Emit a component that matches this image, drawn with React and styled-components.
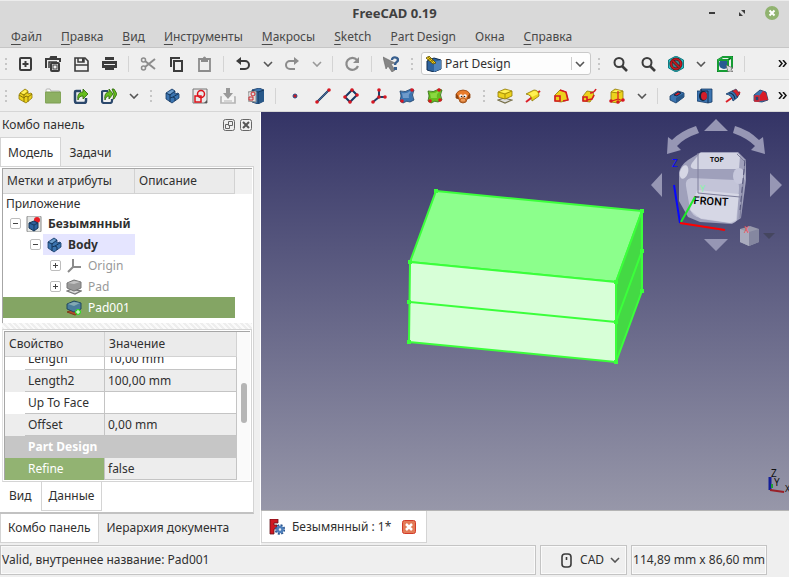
import { useState } from "react";
import styled, { createGlobalStyle } from "styled-components";

const GlobalStyle = createGlobalStyle`
    * { box-sizing: border-box; }
    html, body, #root { height: 100%; }
    body {
        margin: 0;
        overflow: hidden;
        background: #efefef;
        color: #303030;
        font-family: "Noto Sans", "Open Sans", sans-serif;
        font-size: 12px;
        line-height: 20px;
    }
    button, select {
        font: inherit;
        color: inherit;
        border: none;
        background: none;
        padding: 0;
        margin: 0;
    }
    table { border-collapse: separate; border-spacing: 0; }
    svg { display: block; }
`;

const dark = { fill: "none", stroke: "#3c3c3c", strokeWidth: 2 };
const gray = { fill: "none", stroke: "#8c8c8c", strokeWidth: 2 };
const yellow = { fill: "#ecd21c", stroke: "#8f7a08", strokeWidth: 0.8 };
const blue = { fill: "#3b74b0", stroke: "#153a66", strokeWidth: 0.8 };
const red = { fill: "none", stroke: "#d71b23", strokeWidth: 1.6 };

const icons = {
    new: <><rect x="3" y="2" width="11" height="12" rx="1" {...dark} /><path d="M8.500 5v6M5.500 8h6" {...dark} /></>,
    open: <><path d="M1 12V3h4l1-2h6" {...dark} /><path d="M1 3h14v3" {...dark} /><path d="M4 12V6h8" {...dark} strokeWidth="1.500" /><rect x="6" y="7" width="8" height="8" rx="1" fill="#efefef" stroke="#3c3c3c" strokeWidth="2" /><rect x="8" y="9" width="4" height="4" fill="#efefef" stroke="#3c3c3c" /></>,
    save: <><path d="M2 2h10l3 3v10H2z" {...dark} strokeWidth="1.600" /><path d="M5 2v4h6V2M2 9h13" {...dark} strokeWidth="1.500" /><rect x="9" y="2" width="2" height="4" fill="#3c3c3c" /></>,
    print: <><rect x="4" y="1" width="9" height="3" fill="#3c3c3c" /><path d="M1 5h15v7h-3v-2H4v2H1z" fill="#3c3c3c" /><rect x="4" y="9" width="9" height="5" fill="#3c3c3c" /><rect x="3" y="8" width="11" height="1" fill="#eee" /></>,
    cut: <><path d="M5 5l10 8M5 11l10-8" {...gray} /><circle cx="3.500" cy="4" r="2" {...gray} strokeWidth="1.500" /><circle cx="3.500" cy="12" r="2" {...gray} strokeWidth="1.500" /></>,
    copy: <><path d="M3 11V2h9" {...dark} /><rect x="6" y="5" width="8" height="10" {...dark} /></>,
    paste: <><path d="M3 3h11v12H3z" {...gray} strokeWidth="1.800" /><path d="M5 2h7v4H5z" fill="#8c8c8c" /><circle cx="8.500" cy="2" r="1.500" fill="#8c8c8c" /></>,
    undo: <><path d="M3 5h7a4 4 0 0 1 0 8H5" {...dark} /><path d="M6 1v8L1 5z" fill="#3c3c3c" /></>,
    redo: <><path d="M13 5H6a4 4 0 0 0 0 8h5" {...gray} /><path d="M10 1v8l5-4z" fill="#8c8c8c" /></>,
    refresh: <><path d="M13 4a6 6 0 1 0 1 6" {...gray} strokeWidth="2.200" /><path d="M15 1v6H9z" fill="#8c8c8c" /></>,
    whats: <><path d="M0 1l12 6-4 1 4 6-3 2-4-6-2 3z" fill="#858585" stroke="#666" strokeWidth=".6" /><path d="M9 4c0-4 6-3 6 0 0 2-3 2-3 5" fill="none" stroke="#39608f" strokeWidth="2.400" /><rect x="11" y="11" width="3" height="3" fill="#39608f" /></>,
    zoom: <><circle cx="7" cy="6.500" r="4.500" {...dark} /><path d="M10 10l5 5" {...dark} strokeWidth="2.600" /></>,
    drawstyle: <><path d="M8 0l7.500 4v8l-7.500 4-7.500-4V4z" fill="#23c3cc" stroke="#127c82" /><circle cx="8" cy="8" r="5" fill="#3c7f88" stroke="#531a1d" strokeWidth="3" /><circle cx="8" cy="8" r="5" fill="none" stroke="#cc1720" strokeWidth="1.600" /><path d="M4.500 4.500l7 7" stroke="#531a1d" strokeWidth="3" /><path d="M4.500 4.500l7 7" stroke="#cc1720" strokeWidth="1.600" /></>,
    bound: <><circle cx="7" cy="8" r="5" fill="#285a92" /><path d="M1 4l5-3h9v10l-4 4H1zM1 4h10v11M11 4l4-3" fill="none" stroke="#087b21" strokeWidth="2" /><path d="M1 4l5-3h9v10l-4 4H1zM1 4h10v11" fill="none" stroke="#28c64c" strokeWidth=".9" /><path d="M9 9l7 3-2 1 2 3-3-1-2 1z" fill="#ddd" stroke="#555" strokeWidth=".6" /></>,
    part: <><path d="M3 5l5-4 3 2v3l3-1 1 1v4l-6 5-7-4V7z" {...yellow} /><path d="M2 7l5 3v4M7 10l2-2 2 1v5M11 9l4-3M7 7l4-3M3 5l4 2v3" fill="none" stroke="#8a7406" /><path d="M4 5l4-3 2 1-3 3z" fill="#fff25e" /></>,
    folder: <><path d="M1 4V2q0-1 1-1h3l1 2h8q1 0 1 1" fill="#fff" stroke="#b5b5b5" /><rect x="0" y="4" width="16" height="11" rx="1" fill="#8db062" stroke="#7a9c51" /></>,
    link: <><path d="M8 3H3q-1 0-1 1v9q0 2 2 2h7q2 0 2-2v-3" fill="none" stroke="#2b486c" strokeWidth="2.500" /><path d="M5 12c-1-5 1-8 5-8V1l5 5-5 5V8c-3 0-4 1-5 4z" fill="#65bd1d" stroke="#2a6307" strokeWidth=".8" /></>,
    links: <><path d="M7 3H3q-2 0-2 1v9q0 2 2 2h6q2 0 2-2v-2" fill="none" stroke="#2b486c" strokeWidth="2.200" /><path d="M4 12c-1-5 1-8 4-8V1l4 5-4 5V8c-2 0-3 1-4 4zM11 1h2l3 5-3 5h-1l1-5z" fill="#65bd1d" stroke="#2a6307" strokeWidth=".8" /></>,
    body: <><path d="M2 5l6-4 3 2v3l3-1 1 1v4l-7 5-6-4z" {...blue} /><path d="M2 5l4 2v3l3-1 2 1v3M6 7l5-4M9 9l5-3M6 10v4" fill="none" stroke="#143559" /><path d="M3 5l5-3 2 1-4 3z" fill="#72a0cc" /></>,
    sketch: <><path d="M1 1h14v14H1z" fill="#e9e9e9" stroke="#777" /><path d="M12 15l3-3v3z" fill="#555" /><circle cx="9" cy="6" r="3.500" fill="none" stroke="#db1019" strokeWidth="1.500" /><path d="M3 8h6v6H3z" fill="none" stroke="#e0141d" strokeWidth="1.500" /></>,
    map: <><path d="M2 9H1v6h14V9h-1" fill="#f4f4f4" stroke="#b5b5b5" strokeWidth="1.700" /><path d="M6 0h4v5h3l-5 6-5-6h3z" fill="#999" /><path d="M4 13h8" stroke="#b5b5b5" /></>,
    validate: <><path d="M4 2l7-2 5 2v11l-6 3-6-2z" {...blue} /><path d="M10 4l6-2v11l-6 3z" fill="#285889" /><path d="M4 2l6 2v12M10 4l6-2" fill="none" stroke="#16385d" /><path d="M0 4l8-1v11l-8-1z" fill="#ddd" stroke="#888" /><circle cx="5" cy="6" r="2" fill="none" stroke="#cf262d" /><path d="M1 9h4v3H1z" fill="none" stroke="#cf262d" /></>,
    point: <circle cx="8" cy="8" r="2" fill="#cc1923" stroke="#274e87" />,
    line: <><path d="M2 14L14 2" stroke="#16345b" strokeWidth="2" /><path d="M2 14L14 2" stroke="#4c79ac" strokeWidth=".8" /><Dots at={[[2, 14], [14, 2]]} /></>,
    plane: <><path d="M2 9l7-7 5 5-7 7z" fill="none" stroke="#173a64" strokeWidth="2" /><Dots at={[[2, 9], [9, 2], [14, 7], [7, 14]]} /></>,
    axes: <><path d="M8 1v8L2 14M8 9h7" fill="none" stroke="#203e67" strokeWidth="2" /><Dots at={[[8, 2], [2, 14], [14, 9], [8, 9]]} /></>,
    binder: <><path d="M1 3q5 2 11-2l3 1q-3 5 0 10l-4 2q-3-2-7 1l-3-2q2-5 0-10z" {...blue} /><path d="M3 5q5 1 8-2l1 1q-3 2-2 6H4z" fill="#6f9bcb" /><Dots at={[[13, 2], [3, 13]]} /></>,
    subbinder: <><path d="M1 3q5 2 11-2l3 1q-3 5 0 10l-4 2q-3-2-7 1l-3-2q2-5 0-10z" fill="#65bd1d" stroke="#2b6b09" strokeWidth=".8" /><path d="M3 5q5 1 8-2l1 1q-3 2-2 6H4z" fill="#8bd940" /><Dots at={[[12, 2], [3, 13], [13, 12]]} /></>,
    clone: <><path d="M1 6q2-4 7-4t7 4v4l-3 1-1 3-3 1-3-1-1-3-3-1z" fill="#e87c2c" stroke="#97480f" strokeWidth=".8" /><path d="M1 6q2 0 3 5l-3-1zM15 6q-2 0-3 5l3-1z" fill="#8f430e" /><circle cx="6" cy="8" r="1.800" fill="#fff" /><circle cx="10" cy="8" r="1.800" fill="#fff" /><circle cx="6.500" cy="8.500" r=".8" fill="#222" /><circle cx="9.500" cy="8.500" r=".8" fill="#222" /><path d="M5 12q3-4 6 0l-1 2H6z" fill="#f19a56" stroke="#97480f" strokeWidth=".6" /></>,
    pad: <><path d="M1 12l6-2 8 2-7 3z" fill="#ddd" stroke="#77704a" strokeWidth="1.200" /><path d="M1 4l7-3 7 2v5l-7 3-7-2z" {...yellow} /><path d="M2 4l6-2 6 1-6 2z" fill="#fff25c" /><path d="M1 4l7 2 7-3M8 6v5" fill="none" stroke="#a58f0b" /></>,
    revolve: <><path d="M1 14L15 3" stroke="#dc2029" strokeWidth="2" /><path d="M1 6l8-4q5 0 5 6l-7 5q0-6-6-7z" {...yellow} /><path d="M3 6l6-3q3 0 4 3L7 9q-1-3-4-3z" fill="#fff052" /></>,
    loft: <><path d="M2 7l5-5 6 2 2 8-7 2-6-1z" {...yellow} /><path d="M2 8h5v5H2zM7 2l6 2 2 8-5 1" {...red} /></>,
    pipe: <><path d="M2 8l4-5 6 1 1 4-4 6-7-1z" {...yellow} /><path d="M2 9h4v4H2zM9 5q4 0 6-4M6 12l5-1 2-4" {...red} /></>,
    prim: <><path d="M2 4l4-3 8 2v9l-5 3-7-1z" {...yellow} /><path d="M2 4l7 1 5-2" fill="none" stroke="#a58f0b" /><path d="M3 4l4-2 6 1-4 1z" fill="#fff25c" /><path d="M9 3v8l-6 2M9 11l5 2" {...red} strokeWidth="1.200" /><Dots at={[[2, 13], [14, 12], [9, 14]]} /></>,
    pocket: <><path d="M1 8l8-5 6 2v4l-8 6-6-3z" {...blue} /><path d="M7 10l8-5v4l-8 6z" fill="#285889" /><path d="M5 7l4-3 3 1-4 3z" fill="#d91b28" stroke="#122e4e" /></>,
    hole: <><path d="M0 3h4V1h11v13l-4 1-11-2z" {...blue} /><path d="M4 1v2h7v12" fill="none" stroke="#123154" /><ellipse cx="6" cy="8" rx="4" ry="5" fill="#10243f" /><ellipse cx="7" cy="8" rx="3" ry="4" fill="#d41d29" /></>,
    groove: <><path d="M1 14L15 4" stroke="#dc2029" strokeWidth="2" /><path d="M1 6l6-3q6 0 6 6l-5 4q-1-6-7-7z" {...blue} /><path d="M7 3l4-2 4 5-3 3q-1-4-5-6z" fill="#d7222c" stroke="#15345a" strokeWidth=".6" /><path d="M4 5q5 0 6 6" fill="none" stroke="#132c49" strokeWidth="1.200" /></>,
    subloft: <><path d="M1 7l6-5 6 2 2 8-6 2-8-1z" {...blue} /><path d="M7 7l3-4 3 2 2 7-8 1z" fill="#d81b27" /><path d="M2 8h4v5H2z" fill="#24466f" stroke="#df222d" strokeWidth="1.400" /></>,
    workbench: <><path d="M1 5l7-3 7 2v9l-7 3-7-2z" fill="#2e639e" stroke="#0e2c4e" /><path d="M8 6l7-2v9l-7 3z" fill="#4e83bb" /><path d="M3 0l7 7-3 1-7-6z" fill="#efcf1d" stroke="#594800" strokeWidth=".8" /><path d="M2 1l6 6M5 2l-3 2M7 4L4 6" stroke="#594800" strokeWidth=".6" /></>,
    doc: <><rect x="1" y="0" width="14" height="16" rx="1" fill="#e4e7e6" stroke="#888" /><circle cx="11" cy="4" r="3" fill="#e61d25" /><path d="M3 7l5-2 4 2v5l-4 3-5-3z" fill="#2d629e" stroke="#153456" /><path d="M3 7l5 2 4-2M8 9v6" fill="none" stroke="#17395f" /></>,
    origin: <path d="M7 1v8L2 14M7 9h8" fill="none" stroke="#8b8b8b" strokeWidth="2" />,
    padGray: <><path d="M1 12l5-2 9 2-6 3z" fill="#ddd" stroke="#777" strokeWidth="1.300" /><path d="M1 4l7-3 7 2v6l-7 3-7-3z" fill="#999" stroke="#777" /><path d="M2 4l6-2 6 1-6 2z" fill="#c3c3c3" /></>,
    padTip: <><path d="M1 12l5-2 9 2-6 3z" fill="#b44a26" stroke="#7c3d1b" /><path d="M1 4l7-3 7 2v6l-7 3-7-3z" fill="#4a7d9b" stroke="#23485f" /><path d="M2 4l6-2 6 1-6 3z" fill="#83a9b3" /><path d="M12 9v6M9 12h6" stroke="#36dc2c" strokeWidth="3" /><path d="M12 10v4M10 12h4" stroke="#fff" /></>,
    freecad: <><path d="M1 0h8v4H5v2h3v4H5v5H1z" fill="#d01822" stroke="#60131b" strokeWidth=".8" /><circle cx="11" cy="10.500" r="4.300" fill="none" stroke="#2c5690" strokeWidth="2" strokeDasharray="2 1.380" /><circle cx="11" cy="10.500" r="2.500" fill="#efefef" stroke="#4d7fbb" strokeWidth="2.500" /></>,
    mouse: <><rect x="4" y="2" width="9" height="13" rx="3" {...dark} strokeWidth="1.600" /><path d="M8.500 5v3" {...dark} strokeWidth="1.600" /></>,
};

function Dots({ at }) {
    return at.map(([x, y]) => <circle key={`${x}-${y}`} cx={x} cy={y} r="1.800" fill="#d71722" />);
}

const Icon = ({ name }) => (
    <svg width="16" height="16" viewBox="0 0 16 16" aria-hidden="true">{icons[name]}</svg>
);

const Chevron = ({ pale }) => (
    <svg width="10" height="6" viewBox="0 0 10 6" aria-hidden="true">
        <path d="M1 1l4 4 4-4" fill="none" stroke={pale ? "#999" : "#555"} strokeWidth="1.600" />
    </svg>
);

const More = () => (
    <svg width="9" height="7" viewBox="0 0 9 7" aria-hidden="true">
        <path d="M1 0l3 3.500L1 7M5 0l3 3.500L5 7" fill="none" stroke="#111" strokeWidth="1.500" />
    </svg>
);

const menus = [
    ["Ф", "айл"], ["П", "равка"], ["В", "ид"], ["И", "нструменты"], ["М", "акросы"],
    ["S", "ketch"], ["P", "art Design"], ["", "Окна"], ["С", "правка"],
];

// "|" separator, ":" handle, "v" drop-down arrow
const fileBar = ["new", "open", "save", "print", "|", "cut", "copy", "paste", "|", "undo", "v", "redo", "v-", "|", "refresh", "|", "whats", ":"];
const viewBar = [":", "zoom", "zoom", "drawstyle", "v", "bound", "|"];
const designBar = ["part", "folder", "link", "links", "v", ":", "body", "sketch", "map", "validate", "|",
    "point", "line", "plane", "axes", "binder", "subbinder", "clone", ":",
    "pad", "revolve", "loft", "pipe", "prim", "v", "|", "pocket", "hole", "groove", "subloft"];

const tree = [
    { label: "Безымянный", icon: "doc", level: 0, sign: "−", bold: true },
    { label: "Body", icon: "body", level: 1, sign: "−", bold: true, active: true },
    { label: "Origin", icon: "origin", level: 2, sign: "+", dim: true },
    { label: "Pad", icon: "padGray", level: 2, sign: "+", dim: true },
    { label: "Pad001", icon: "padTip", level: 2, selected: true },
];

const props = [
    ["Length", "10,00 mm"],
    ["Length2", "100,00 mm"],
    ["Up To Face", ""],
    ["Offset", "0,00 mm"],
];

const Tools = ({ items }) => items.map((item, i) => {
    if (item === "|") return <Separator key={i} />;
    if (item === ":") return <Handle key={i} />;
    if (item[0] === "v" && item.length < 3) {
        return <ArrowButton key={i} aria-label="menu"><Chevron pale={item === "v-"} /></ArrowButton>;
    }
    return <ToolButton key={i} aria-label={item}><Icon name={item} /></ToolButton>;
});

const Scene = () => (
    <svg width="100%" height="100%" viewBox="261 112 528 398" preserveAspectRatio="xMaxYMin meet">
        <g stroke="#3bff3b" strokeWidth="2" strokeLinejoin="round">
            <path d="M436 191l206 20-26 71-206-20z" fill="#8cff8c" />
            <path d="M642 211v80l-26 71v-80z" fill="#44d944" />
            <path d="M410 262l206 20v80l-207-20z" fill="#d7ffd7" />
            <path d="M410 302l206 20 26-71" fill="none" />
        </g>
        <g fill="#3bff3b">
            {[[436, 191], [642, 211], [616, 282], [410, 262], [409, 302], [616, 322], [642, 251], [642, 291], [409, 342], [616, 362]].map(([x, y]) => (
                <rect key={`${x}-${y}`} x={x - 2} y={y - 2} width="4" height="4" />
            ))}
        </g>
        <g fill="#9696b4">
            <path d="M716 119l12 12h-24zM716 251l-12-12h24zM651 185l11-12v24zM782 185l-12-12v24z" />
            <path d="M696 126l3 7q-15 5-22 13l4 4-14 4 1-17 4 3q9-9 24-14z" />
            <path d="M735 126l-2 7q14 5 22 13l-4 4 14 4-2-17-4 3q-10-10-24-14z" />
        </g>
        <path d="M701 152h37l8 8v20l-5 38-9 6-32-2-12-5-9-16v-29q2-7 9-12z" fill="#9fa0bb" />
        <path d="M700 153h36q3 0 4 3l-1 13h-42q-9 0-5-6z" fill="#d3d4e3" />
        <path d="M691 178l44 2q4 1 4 8l-2 32q-2 3-6 3l-31-5q-8-2-10-9l-4-23q-1-7 5-8z" fill="#c3c4d8" />
        <path d="M697 190l42 4-3 26-6 3-29-4-11-9z" fill="#dedfeb" opacity=".7" />
        <ellipse cx="684" cy="172" rx="4" ry="7" transform="rotate(18 684 172)" fill="#d6d7e5" />
        <ellipse cx="739" cy="176" rx="6" ry="8" fill="#c7c8dc" />
        <path d="M698 153v40l42 4M737 154l8 8-5 56" fill="none" stroke="#7e7f9c" />
        <path d="M745 160l-5 50" stroke="#54557b" strokeDasharray="6 3" />
        <text x="717" y="162" textAnchor="middle" fontSize="7" fontWeight="700" fill="#111">TOP</text>
        <text x="711" y="205" textAnchor="middle" fontSize="11" fontWeight="500" fontFamily="Roboto, sans-serif" fill="#000" transform="rotate(3 711 201)">FRONT</text>
        <path d="M674 185l6 38" stroke="#0808ff" strokeWidth="2" />
        <path d="M681 222l14-25" stroke="#1eea2a" strokeWidth="2" />
        <path d="M680 223l45 7" stroke="#f00" strokeWidth="2" />
        <text x="672" y="167" fontSize="10" fill="#0808ff">Z</text>
        <text x="700" y="192" fontSize="9" fill="#86f7a4">Y</text>
        <path d="M740 229l10-3 9 3v13l-10 4-9-4z" fill="#9799ac" />
        <path d="M740 229l9 3 10-3v13l-10 4z" fill="#8587a0" />
        <path d="M740 229l9 3v14l-9-4z" fill="#a9abbd" />
        <text x="744" y="233" fontSize="8" fill="#ff4b50">X</text>
        <path d="M763 233h12l-6 6z" fill="#45465f" />
        <path d="M770 477v13" stroke="#141f99" strokeWidth="3" />
        <path d="M770 490l14 2" stroke="#992028" strokeWidth="2" />
        <path d="M772 484v4" stroke="#1fa030" strokeWidth="2" />
        <text x="771" y="477" fontSize="10" fill="#111">Z</text>
        <text x="774" y="486" fontSize="10" fill="#111">Y</text>
        <text x="785" y="492" fontSize="9" fill="#111">X</text>
    </svg>
);

const App = () => {
    const [bench, setBench] = useState("Part Design");

    return (
        <Window>
            <GlobalStyle />
            <TitleBar>
                <h1>FreeCAD 0.19</h1>
                <WindowButtons>
                    <button aria-label="Свернуть"><svg width="16" height="16"><path d="M5 8h6" stroke="#3c3c3c" strokeWidth="2" /></svg></button>
                    <button aria-label="Развернуть"><svg width="16" height="16"><path d="M7 5h4v4zM5 7v4h4z" fill="#3c3c3c" /></svg></button>
                    <button aria-label="Закрыть"><svg width="16" height="16"><circle cx="8" cy="8" r="7" fill="#91b370" /><path d="M5.500 5.500l5 5M10.500 5.500l-5 5" stroke="#fff" strokeWidth="2" /></svg></button>
                </WindowButtons>
            </TitleBar>
            <MenuBar>
                {menus.map(([key, rest]) => <button key={rest}><u>{key}</u>{rest}</button>)}
            </MenuBar>
            <ToolBar>
                <Handle $first />
                <Tools items={fileBar} />
                <Workbench>
                    <Icon name="workbench" />
                    <select aria-label="Верстак" value={bench} onChange={(e) => setBench(e.target.value)}>
                        <option>Part Design</option>
                        <option>Sketcher</option>
                    </select>
                    <span><Chevron /></span>
                </Workbench>
                <Tools items={viewBar} />
                <MoreButton aria-label="Ещё"><More /></MoreButton>
            </ToolBar>
            <ToolBar>
                <Handle $first />
                <Tools items={designBar} />
                <MoreButton aria-label="Ещё"><More /></MoreButton>
            </ToolBar>
            <Main>
                <Dock>
                    <DockTitle>
                        <h2>Комбо панель</h2>
                        <button aria-label="Открепить"><svg width="12" height="12"><rect x=".5" y=".5" width="11" height="11" rx="2" fill="none" stroke="#666" /><path d="M5.500 2.500h4v4h-4zM5 5.500H2.500v4h4V7" fill="none" stroke="#666" /></svg></button>
                        <button aria-label="Закрыть панель"><svg width="12" height="12"><rect x=".5" y=".5" width="11" height="11" rx="2" fill="none" stroke="#666" /><path d="M3 3l6 6M9 3l-6 6" stroke="#555" strokeWidth="2" /></svg></button>
                    </DockTitle>
                    <TopTabs>
                        <TopTab $on>Модель</TopTab>
                        <TopTab>Задачи</TopTab>
                    </TopTabs>
                    <Frame>
                        <TreePanel>
                            <TreeTable>
                                <thead><tr><th>Метки и атрибуты</th><th>Описание</th><th aria-label="пусто" /></tr></thead>
                                <tbody>
                                    <TreeRow $root><td colSpan="2">Приложение</td></TreeRow>
                                    {tree.map((node) => (
                                        <TreeRow key={node.label} $selected={node.selected}>
                                            <td colSpan={node.active ? 1 : 2}>
                                                <Node $level={node.level}>
                                                    {node.sign ? <Expander aria-label={node.label}><svg width="7" height="7"><path d={node.sign === "+" ? "M1 3.500h5M3.500 1v5" : "M1 3.500h5"} stroke="#444" /></svg></Expander> : <Gap />}
                                                    <Label $bold={node.bold} $dim={node.dim} $active={node.active}><Icon name={node.icon} />{node.label}</Label>
                                                </Node>
                                            </td>
                                        </TreeRow>
                                    ))}
                                </tbody>
                            </TreeTable>
                        </TreePanel>
                        <Splitter />
                        <PropertyFrame>
                            <PropertyPanel>
                                <PropertyHead><span>Свойство</span><span>Значение</span></PropertyHead>
                                <Scroll>
                                    <PropertyTable>
                                        <tbody>
                                            {props.map(([name, value], i) => (
                                                <PropertyRow key={name} $shade={i % 2}><th scope="row"><span>{name}</span></th><td>{value}</td></PropertyRow>
                                            ))}
                                            <GroupRow><th colSpan="2">Part Design</th></GroupRow>
                                            <PropertyRow $shade $current><th scope="row"><span>Refine</span></th><td>false</td></PropertyRow>
                                        </tbody>
                                    </PropertyTable>
                                    <Track><Thumb /></Track>
                                </Scroll>
                            </PropertyPanel>
                        </PropertyFrame>
                        <InnerTabs>
                            <InnerTab>Вид</InnerTab>
                            <InnerTab $raised>Данные</InnerTab>
                        </InnerTabs>
                    </Frame>
                    <DockTabs>
                        <DockTab $on>Комбо панель</DockTab>
                        <DockTab>Иерархия документа</DockTab>
                    </DockTabs>
                </Dock>
                <Work>
                    <View><Scene /></View>
                    <DocTabs>
                        <DocTab>
                            <Icon name="freecad" />
                            <span>Безымянный : 1*</span>
                            <button aria-label="Закрыть документ"><svg width="14" height="14"><rect x=".5" y=".5" width="13" height="13" rx="2" fill="#e37b57" stroke="#d23b29" /><path d="M4 4l6 6M10 4l-6 6" stroke="#fff" strokeWidth="2.500" /></svg></button>
                        </DocTab>
                    </DocTabs>
                </Work>
            </Main>
            <StatusBar>
                <StatusText>Valid, внутреннее название: Pad001</StatusText>
                <NavStyle><Icon name="mouse" />CAD<Chevron /></NavStyle>
                <Size>114,89 mm x 86,60 mm</Size>
            </StatusBar>
        </Window>
    );
};

export default App;

const Window = styled.div`
    display: flex;
    flex-direction: column;
    height: 100vh;
`;

const TitleBar = styled.header`
    display: grid;
    grid-template-columns: 1fr auto 1fr;
    align-items: center;
    height: 25px;
    background: #d9d9d9;
    border-top: 1px solid #ececec;
    h1 {
        grid-column: 2;
        margin: 0;
        font-size: 13px;
        font-weight: 700;
        color: #404040;
    }
`;

const WindowButtons = styled.div`
    display: flex;
    justify-content: flex-end;
    gap: 14px;
    padding-right: 9px;
`;

const MenuBar = styled.nav`
    display: flex;
    gap: 19px;
    height: 23px;
    padding: 2px 0 0 11px;
    background: #d9d9d9;
    border-bottom: 1px solid #c6c6c6;
    color: #484848;
    button {
        display: flex;
        align-items: center;
        white-space: pre;
    }
    u { text-underline-offset: 3px; }
`;

const ToolBar = styled.div`
    display: flex;
    align-items: center;
    height: 32px;
    border-bottom: 1px solid #d6d6d6;
`;

const ToolButton = styled.button`
    display: flex;
    align-items: center;
    justify-content: center;
    flex: 0 0 28px;
    height: 28px;
`;

const ArrowButton = styled(ToolButton)`
    flex-basis: 21px;
`;

const MoreButton = styled(ToolButton)`
    flex-basis: 14px;
    margin-left: auto;
`;

const Separator = styled.span`
    flex: 0 0 1px;
    height: 16px;
    margin: 0 5px;
    background: #d4d4d4;
`;

const Handle = styled.span`
    flex: 0 0 2px;
    height: 12px;
    margin: ${(props) => (props.$first ? "0 4px 0 5px" : "0 6px")};
    background: repeating-linear-gradient(#c6c6c6 0 2px, transparent 2px 5px);
`;

const Workbench = styled.label`
    display: flex;
    align-items: center;
    flex: 0 0 170px;
    height: 23px;
    margin: 0 1px 0 2px;
    padding-left: 4px;
    background: #fdfdfd;
    border: 1px solid #c9c9c9;
    border-radius: 3px;
    select {
        flex: 1;
        min-width: 0;
        padding-left: 3px;
        appearance: none;
        outline: none;
    }
    span {
        display: flex;
        align-items: center;
        height: 13px;
        padding: 0 5px 0 3px;
        border-left: 1px solid #ccc;
    }
`;

const Main = styled.main`
    display: flex;
    flex: 1;
    min-height: 0;
`;

const Dock = styled.aside`
    display: flex;
    flex-direction: column;
    flex: 0 0 261px;
    padding-right: 6px;
    border-right: 1px solid #fff;
`;

const DockTitle = styled.div`
    display: flex;
    align-items: center;
    gap: 5px;
    height: 25px;
    padding: 0 2px;
    h2 {
        flex: 1;
        margin: 0;
        font-size: inherit;
        font-weight: 400;
    }
`;

const TopTabs = styled.div`
    display: flex;
    height: 29px;
`;

const TopTab = styled.button`
    padding: 2px 7px 0;
    background: ${(props) => (props.$on ? "#fff" : "none")};
    border: 1px solid ${(props) => (props.$on ? "#d4d4d4" : "transparent")};
    border-bottom: none;
`;

const Frame = styled.section`
    display: flex;
    flex-direction: column;
    flex: 1;
    min-height: 0;
    padding: 1px 1px 0 2px;
    background: #fff;
    border: 1px solid #d4d4d4;
    border-width: 1px 1px 2px 0;
    border-bottom-color: #c2c2c2;
`;

const TreePanel = styled.div`
    flex: 1;
    min-height: 0;
    overflow: hidden;
    border-left: 1px solid #a6a6a6;
    border-top: 1px solid #a6a6a6;
`;

const TreeTable = styled.table`
    width: 100%;
    table-layout: fixed;
    th {
        height: 25px;
        padding: 0 4px;
        font-weight: 400;
        text-align: left;
        background: #ebebeb;
        border: 1px solid #d2d2d2;
        border-width: 0 1px 1px 0;
    }
    th:nth-child(1) { width: 132px; }
    th:nth-child(2) { width: 100px; }
    th:nth-child(3) { background: #f0f0f0; border: none; }
`;

const TreeRow = styled.tr`
    td {
        height: ${(props) => (props.$root ? 19 : 21)}px;
        padding: 0 0 0 3px;
        line-height: ${(props) => (props.$root ? 19 : 20)}px;
        background: ${(props) => (props.$selected ? "#84a564" : "none")};
        color: ${(props) => (props.$selected ? "#fff" : "inherit")};
    }
`;

const Node = styled.div`
    display: flex;
    align-items: center;
    padding-left: ${(props) => props.$level * 20 + 4}px;
`;

const Expander = styled.button`
    display: flex;
    align-items: center;
    justify-content: center;
    flex: 0 0 11px;
    height: 11px;
    border: 1px solid #bdbdbd;
    border-radius: 2px;
`;

const Gap = styled.span`
    flex: 0 0 11px;
`;

const Label = styled.span`
    display: flex;
    align-items: center;
    flex: 1;
    gap: 6px;
    height: 21px;
    margin-left: 2px;
    padding-left: 3px;
    font-weight: ${(props) => (props.$bold ? 700 : 400)};
    color: ${(props) => (props.$dim ? "#999" : "inherit")};
    background: ${(props) => (props.$active ? "#e5e5ff" : "none")};
`;

const Splitter = styled.div`
    height: 6px;
    background: repeating-linear-gradient(45deg, #eee 0 2px, #fafafa 2px 4px);
`;

const PropertyFrame = styled.div`
    padding: 1px;
    border: 1px solid #d4d4d4;
    border-left-color: #e2e2e2;
`;

const PropertyPanel = styled.div`
    border: 1px solid #a6a6a6;
    border-width: 1px 0 0 1px;
`;

const PropertyHead = styled.div`
    display: grid;
    grid-template-columns: 100px 132px 1fr;
    height: 25px;
    background: linear-gradient(90deg, #ebebeb 232px, #fafafa 232px);
    span {
        padding: 2px 4px 0;
        border: 1px solid #d2d2d2;
        border-width: 0 1px 1px 0;
    }
`;

const Scroll = styled.div`
    display: flex;
    align-items: flex-end;
    height: 123px;
    overflow: hidden;
`;

const PropertyTable = styled.table`
    flex: 0 0 232px;
    table-layout: fixed;
    width: 232px;
`;

const PropertyRow = styled.tr`
    th, td {
        height: 22px;
        padding: 0;
        font-weight: 400;
        text-align: left;
        background: ${(props) => (props.$shade ? "#ededed" : "#fff")};
    }
    th {
        width: 100px;
        padding-left: 20px;
        border-right: 1px solid #c4c4c4;
        background: ${(props) => props.$current && "#92b372"};
        color: ${(props) => props.$current && "#fff"};
    }
    th span {
        display: block;
        height: 22px;
        padding-left: 3px;
        line-height: 22px;
        border-bottom: 1px solid ${(props) => (props.$current ? "transparent" : "#c4c4c4")};
    }
    td {
        padding-left: 3px;
        border: 1px solid #c4c4c4;
        border-width: 0 1px 1px 0;
    }
`;

const GroupRow = styled.tr`
    th {
        height: 22px;
        padding: 0 0 0 23px;
        text-align: left;
        color: #fff;
        background: #c6c6c6;
    }
`;

const Track = styled.div`
    flex: 1;
    align-self: stretch;
    padding: 26px 3px 0 4px;
    background: #fafafa;
`;

const Thumb = styled.div`
    width: 6px;
    height: 40px;
    border-radius: 3px;
    background: #b5b5b5;
`;

const InnerTabs = styled.div`
    display: flex;
    align-items: flex-start;
    height: 30px;
    margin-left: -2px;
`;

const InnerTab = styled.button`
    height: 29px;
    padding: ${(props) => (props.$raised ? "0 7px" : "0 8px")};
    border: 1px solid ${(props) => (props.$raised ? "#d4d4d4" : "transparent")};
    border-top: none;
`;

const DockTabs = styled.div`
    display: flex;
    height: 31px;
`;

const DockTab = styled.button`
    height: 29px;
    padding: 0 7px;
    background: ${(props) => (props.$on ? "#fff" : "none")};
    border: 1px solid ${(props) => (props.$on ? "#d4d4d4" : "transparent")};
    border-top: none;
`;

const Work = styled.div`
    display: flex;
    flex-direction: column;
    flex: 1;
    min-width: 0;
`;

const View = styled.div`
    flex: 1;
    min-height: 0;
    background: linear-gradient(#343466, #9797a9);
    border-bottom: 1px solid #b4b4b4;
`;

const DocTabs = styled.div`
    height: 34px;
`;

const DocTab = styled.div`
    display: flex;
    align-items: center;
    width: fit-content;
    height: 32px;
    padding: 0 10px 0 7px;
    background: #fff;
    border: 1px solid #d4d4d4;
    border-top: none;
    span { margin: 0 11px 0 7px; }
`;

const StatusBar = styled.footer`
    display: flex;
    gap: 4px;
    height: 32px;
    padding: 0 22px 2px 0;
`;

const StatusText = styled.div`
    flex: 1;
    padding: 4px 1px;
    white-space: nowrap;
    border: 1px solid #c4c4c4;
    box-shadow: inset 0 0 0 1px #fafafa;
`;

const NavStyle = styled.button`
    display: flex;
    align-items: center;
    justify-content: flex-end;
    gap: 6px;
    flex: 0 0 87px;
    padding-right: 6px;
    border: 1px solid #c4c4c4;
    box-shadow: inset 0 0 0 1px #fafafa;
`;

const Size = styled(StatusText)`
    flex: 0 0 135px;
`;
